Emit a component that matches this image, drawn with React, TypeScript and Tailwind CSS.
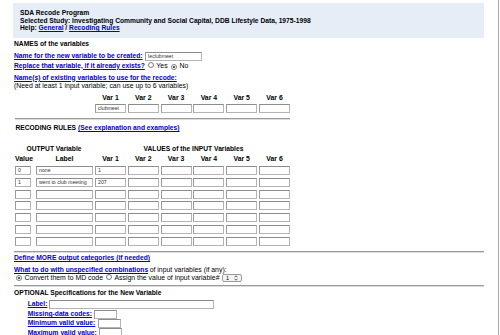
import React from "react";

const Radio = ({ on }: { on?: boolean }) => (
  <span className="inline-flex w-[6px] h-[6px] rounded-full border border-[#7a7a7a] bg-white items-center justify-center shrink-0">
    {on && <span className="w-[2px] h-[2px] rounded-full bg-[#222]" />}
  </span>
);

const Field = ({ cls, text }: { cls: string; text?: string }) => (
  <div
    className={`h-[9px] border border-[#b4b4b4] border-t-[#8c8c8c] border-l-[#9c9c9c] bg-white text-[5.2px] leading-[7px] pl-[2px] text-[#333] font-normal overflow-hidden whitespace-nowrap shrink-0 ${cls}`}
  >
    {text}
  </div>
);

const Link = ({ children }: { children: React.ReactNode }) => (
  <span className="text-[#0000cc] underline font-bold text-[6.7px]">{children}</span>
);

const Hr = ({ cls }: { cls: string }) => (
  <div className={`h-[2px] border-t border-[#9a9a9a] border-b border-b-[#dcdcdc] ${cls}`} />
);

const rows: [string, string, string][] = [
  ["0", "none", "1"],
  ["1", "went to club meeting", "207"],
  ["", "", ""],
  ["", "", ""],
  ["", "", ""],
  ["", "", ""],
  ["", "", ""],
];

const vars = ["Var 1", "Var 2", "Var 3", "Var 4", "Var 5", "Var 6"];

export default function App() {
  return (
    <div className="w-[499px] h-[335px] overflow-hidden bg-white border-r border-[#a8a8a8] font-['Liberation_Sans',Arial,sans-serif] text-black flex flex-col">
      {/* Header */}
      <div className="mt-[3px] ml-[13px] w-[471px] h-[35px] bg-[#e6edf7] pl-[7px] pt-[6px] font-bold text-[6.7px] leading-[7.5px] shrink-0">
        <div>SDA Recode Program</div>
        <div>Selected Study: Investigating Community and Social Capital, DDB Lifestyle Data, 1975-1998</div>
        <div>
          Help: <span className="text-[#0000cc] underline">General</span> /{" "}
          <span className="text-[#0000cc] underline">Recoding Rules</span>
        </div>
      </div>

      <div className="ml-[14px] flex flex-col">
        <div className="mt-[2px] h-[8px] leading-[8px] text-[6.7px] font-bold">NAMES of the variables</div>

        <div className="mt-[3.5px] h-[9px] flex items-center leading-[8px]">
          <Link>Name for the new variable to be created:</Link>
          <Field cls="ml-[2.5px] w-[57px]" text="leclubmeet" />
        </div>

        <div className="mt-[0.5px] h-[9px] flex items-center leading-[8px] text-[6.9px]">
          <Link>Replace that variable, if it already exists?</Link>
          <span className="ml-[3px]"><Radio /></span>
          <span className="ml-[2.5px]">Yes</span>
          <span className="ml-[3px]"><Radio on /></span>
          <span className="ml-[3px]">No</span>
        </div>

        <div className="mt-[3.5px] h-[8px] leading-[8px] flex items-center">
          <Link>Name(s) of existing variables to use for the recode:</Link>
        </div>
        <div className="h-[8px] leading-[8px] text-[6.9px]">
          (Need at least 1 input variable; can use up to 6 variables)
        </div>

        <div className="mt-[4px] h-[8px] leading-[8px] flex pl-[81px] gap-[1.8px] text-[6.9px] font-bold">
          {vars.map((v) => (
            <div key={v} className="w-[31px] text-center">{v}</div>
          ))}
        </div>
        <div className="mt-[2.8px] h-[9px] flex pl-[81px] gap-[1.8px]">
          {vars.map((v, i) => (
            <Field key={v} cls="w-[31px]" text={i === 0 ? "clubmeet" : ""} />
          ))}
        </div>

        <Hr cls="mt-[5.2px] ml-[1px] w-[275px]" />

        <div className="mt-[4px] h-[8px] leading-[8px] pl-[1.5px] text-[6.7px] font-bold flex items-center">
          <span>RECODING RULES</span>
          <span className="ml-[2px]"><Link>(See explanation and examples)</Link></span>
        </div>

        <div className="mt-[12.5px] h-[8px] leading-[8px] flex pl-[1px] text-[6.7px] font-bold">
          <div className="w-[78px] text-center">OUTPUT Variable</div>
          <div className="ml-[2px] w-[197px] text-center">VALUES of the INPUT Variables</div>
        </div>
        <div className="mt-[2px] h-[8px] leading-[8px] flex pl-[1px] text-[6.9px] font-bold">
          <div className="w-[21px]">Value</div>
          <div className="w-[57px] text-center">Label</div>
          <div className="ml-[2px] flex gap-[1.8px]">
            {vars.map((v) => (
              <div key={v} className="w-[31px] text-center">{v}</div>
            ))}
          </div>
        </div>

        <div className="mt-[3px] flex flex-col gap-[2.83px] pl-[1px]">
          {rows.map((r, idx) => (
            <div key={idx} className="h-[9px] flex">
              <Field cls="w-[16px]" text={r[0]} />
              <Field cls="ml-[5px] w-[57px]" text={r[1]} />
              <div className="ml-[2px] flex gap-[1.8px]">
                {vars.map((v, i) => (
                  <Field key={v} cls="w-[31px]" text={i === 0 ? r[2] : ""} />
                ))}
              </div>
            </div>
          ))}
        </div>

        <Hr cls="mt-[5px] w-[470px]" />

        <div className="mt-[1.3px] h-[8px] leading-[8px] flex items-center">
          <Link>Define MORE output categories (if needed)</Link>
        </div>
        <div className="mt-[3.7px] h-[8px] leading-[8px] flex items-center text-[6.9px]">
          <Link>What to do with unspecified combinations</Link>
          <span className="ml-[1.5px]">of input variables (if any):</span>
        </div>
        <div className="h-[8px] leading-[8px] flex items-center text-[6.9px] pl-[2px]">
          <Radio on />
          <span className="ml-[2.5px]">Convert them to MD code</span>
          <span className="ml-[3px]"><Radio /></span>
          <span className="ml-[2.5px]">Assign the value of input variable#</span>
          <div className="ml-[2.5px] w-[20px] h-[8px] rounded-[2px] border border-[#9a9a9a] bg-[#f4f4f4] flex items-center justify-between px-[3px] text-[5.5px] leading-[6px]">
            <span>1</span>
            <svg width="4" height="6" viewBox="0 0 4 6">
              <path d="M0.5 2.3 L2 0.8 L3.5 2.3" fill="none" stroke="#333" strokeWidth="0.8" />
              <path d="M0.5 3.7 L2 5.2 L3.5 3.7" fill="none" stroke="#333" strokeWidth="0.8" />
            </svg>
          </div>
        </div>

        <Hr cls="mt-[3.5px] w-[470px]" />

        <div className="mt-[1.8px] h-[8px] leading-[8px] text-[6.7px] font-bold">
          OPTIONAL Specifications for the New Variable
        </div>

        <div className="pl-[13.7px] flex flex-col">
          <div className="mt-[2.7px] h-[9px] flex items-center leading-[8px]">
            <Link>Label:</Link>
            <Field cls="ml-[1.5px] w-[165px]" />
          </div>
          <div className="mt-[1px] h-[9px] flex items-center leading-[8px]">
            <Link>Missing-data codes:</Link>
            <Field cls="ml-[2.5px] w-[23px]" />
          </div>
          <div className="h-[9px] flex items-center leading-[8px]">
            <Link>Minimum valid value:</Link>
            <Field cls="ml-[2.5px] w-[23px]" />
          </div>
          <div className="mt-[0.5px] h-[9px] flex items-center leading-[8px]">
            <Link>Maximum valid value:</Link>
            <Field cls="ml-[2.5px] w-[23px]" />
          </div>
        </div>
      </div>
    </div>
  );
}
